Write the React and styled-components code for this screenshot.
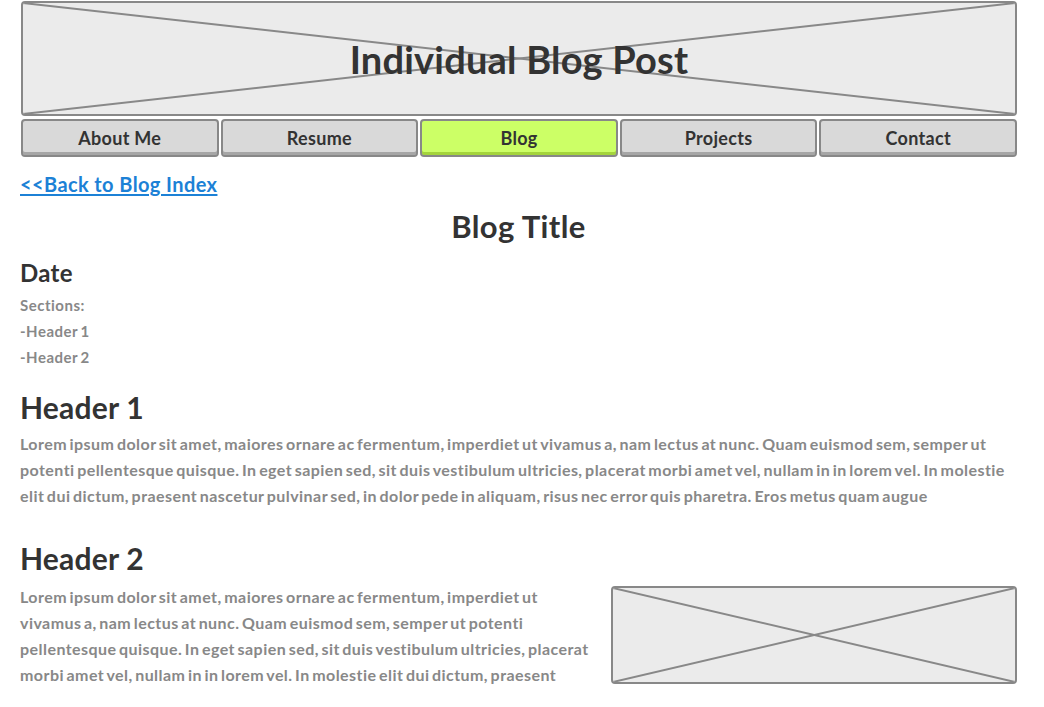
import React from "react";
import styled, { createGlobalStyle } from "styled-components";

const GlobalStyle = createGlobalStyle`
  html, body {
    margin: 0;
    padding: 0;
    background: #fff;
  }
  body {
    font-family: Lato, "Open Sans", sans-serif;
    font-weight: 700;
  }
`;

const navItems = ["About Me", "Resume", "Blog", "Projects", "Contact"];

const lorem1 =
  "Lorem ipsum dolor sit amet, maiores ornare ac fermentum, imperdiet ut vivamus a, nam lectus at nunc. Quam euismod sem, semper ut potenti pellentesque quisque. In eget sapien sed, sit duis vestibulum ultricies, placerat morbi amet vel, nullam in in lorem vel. In molestie elit dui dictum, praesent nascetur pulvinar sed, in dolor pede in aliquam, risus nec error quis pharetra. Eros metus quam augue";

const lorem2 =
  "Lorem ipsum dolor sit amet, maiores ornare ac fermentum, imperdiet ut vivamus a, nam lectus at nunc. Quam euismod sem, semper ut potenti pellentesque quisque. In eget sapien sed, sit duis vestibulum ultricies, placerat morbi amet vel, nullam in in lorem vel. In molestie elit dui dictum, praesent";

// crossed box used by wireframe placeholders
const Cross = () => (
  <CrossSvg viewBox="0 0 100 100" preserveAspectRatio="none">
    <line x1="0" y1="0" x2="100" y2="100" vectorEffect="non-scaling-stroke" />
    <line x1="100" y1="0" x2="0" y2="100" vectorEffect="non-scaling-stroke" />
  </CrossSvg>
);

const App = () => {
  return (
    <>
      <GlobalStyle />
      <Page>
        <HeaderBox>
          <Cross />
          <SiteTitle>Individual Blog Post</SiteTitle>
        </HeaderBox>
        <Nav>
          {navItems.map((item) => (
            <NavButton key={item} $active={item === "Blog"}>
              {item}
            </NavButton>
          ))}
        </Nav>
        <BackLink href="#">&lt;&lt;Back to Blog Index</BackLink>
        <PostTitle>Blog Title</PostTitle>
        <DateLine>Date</DateLine>
        <Sections>
          <li>Sections:</li>
          <li>-Header 1</li>
          <li>-Header 2</li>
        </Sections>
        <SectionHeader $top={20}>Header 1</SectionHeader>
        <Paragraph>{lorem1}</Paragraph>
        <SectionHeader $top={32}>Header 2</SectionHeader>
        <MediaRow>
          <Paragraph>{lorem2}</Paragraph>
          <ImageBox>
            <Cross />
          </ImageBox>
        </MediaRow>
      </Page>
    </>
  );
};

const Page = styled.div`
  width: 997px;
  padding: 1px 0 0 20px;
`;

const CrossSvg = styled.svg`
  position: absolute;
  inset: 0;
  width: 100%;
  height: 100%;
  line {
    stroke: #888;
    stroke-width: 2;
  }
`;

const HeaderBox = styled.div`
  position: relative;
  box-sizing: border-box;
  height: 115px;
  margin-left: 1px;
  border: 2px solid #888;
  border-radius: 4px;
  background: #ebebeb;
  overflow: hidden;
  display: flex;
  align-items: center;
  justify-content: center;
`;

const SiteTitle = styled.h1`
  position: relative;
  margin: 0;
  font-size: 38px;
  letter-spacing: 0.2px;
  font-weight: 700;
  color: #333;
`;

const Nav = styled.nav`
  display: grid;
  grid-template-columns: repeat(5, 1fr);
  gap: 2px;
  margin-top: 3px;
  margin-left: 1px;
`;

const NavButton = styled.div`
  box-sizing: border-box;
  height: 38px;
  border: 2px solid #888;
  border-radius: 4px;
  background: ${(p) => (p.$active ? "#ccff66" : "#d9d9d9")};
  box-shadow: inset 0 -3px 0 ${(p) => (p.$active ? "#a4d43c" : "#a6a6a6")};
  display: flex;
  align-items: center;
  justify-content: center;
  font-size: 18px;
  letter-spacing: 0.3px;
  color: #333;
  padding-bottom: 1px;
`;

const BackLink = styled.a`
  display: inline-block;
  margin-top: 14px;
  font-size: 20px;
  letter-spacing: 0.4px;
  line-height: 26px;
  color: #1c81d6;
  text-decoration: underline;
  text-underline-offset: 2px;
`;

const PostTitle = styled.h2`
  margin: 12px 0 0;
  text-align: center;
  font-size: 31px;
  letter-spacing: 0.4px;
  line-height: 34px;
  color: #333;
`;

const DateLine = styled.h3`
  margin: 16px 0 0;
  font-size: 24px;
  letter-spacing: 0.3px;
  line-height: 28px;
  color: #333;
`;

const Sections = styled.ul`
  list-style: none;
  margin: 5px 0 0;
  padding: 0;
  font-size: 15px;
  letter-spacing: 0.5px;
  word-spacing: -1.5px;
  line-height: 26px;
  color: #888;
`;

const SectionHeader = styled.h2`
  margin: ${(p) => p.$top}px 0 0;
  font-size: 30px;
  letter-spacing: 0.2px;
  line-height: 34px;
  color: #333;
`;

const Paragraph = styled.p`
  margin: 7px 0 0;
  font-size: 16px;
  letter-spacing: 0.45px;
  word-spacing: -1.8px;
  line-height: 26px;
  color: #888;
`;

const MediaRow = styled.div`
  display: flex;
  align-items: flex-start;
  gap: 22px;
  margin-top: 2px;
  ${Paragraph} {
    flex: 1;
  }
`;

const ImageBox = styled.div`
  position: relative;
  box-sizing: border-box;
  flex: 0 0 406px;
  height: 98px;
  margin-top: 9px;
  border: 2px solid #888;
  border-radius: 4px;
  background: #ebebeb;
  overflow: hidden;
`;

export default App;
